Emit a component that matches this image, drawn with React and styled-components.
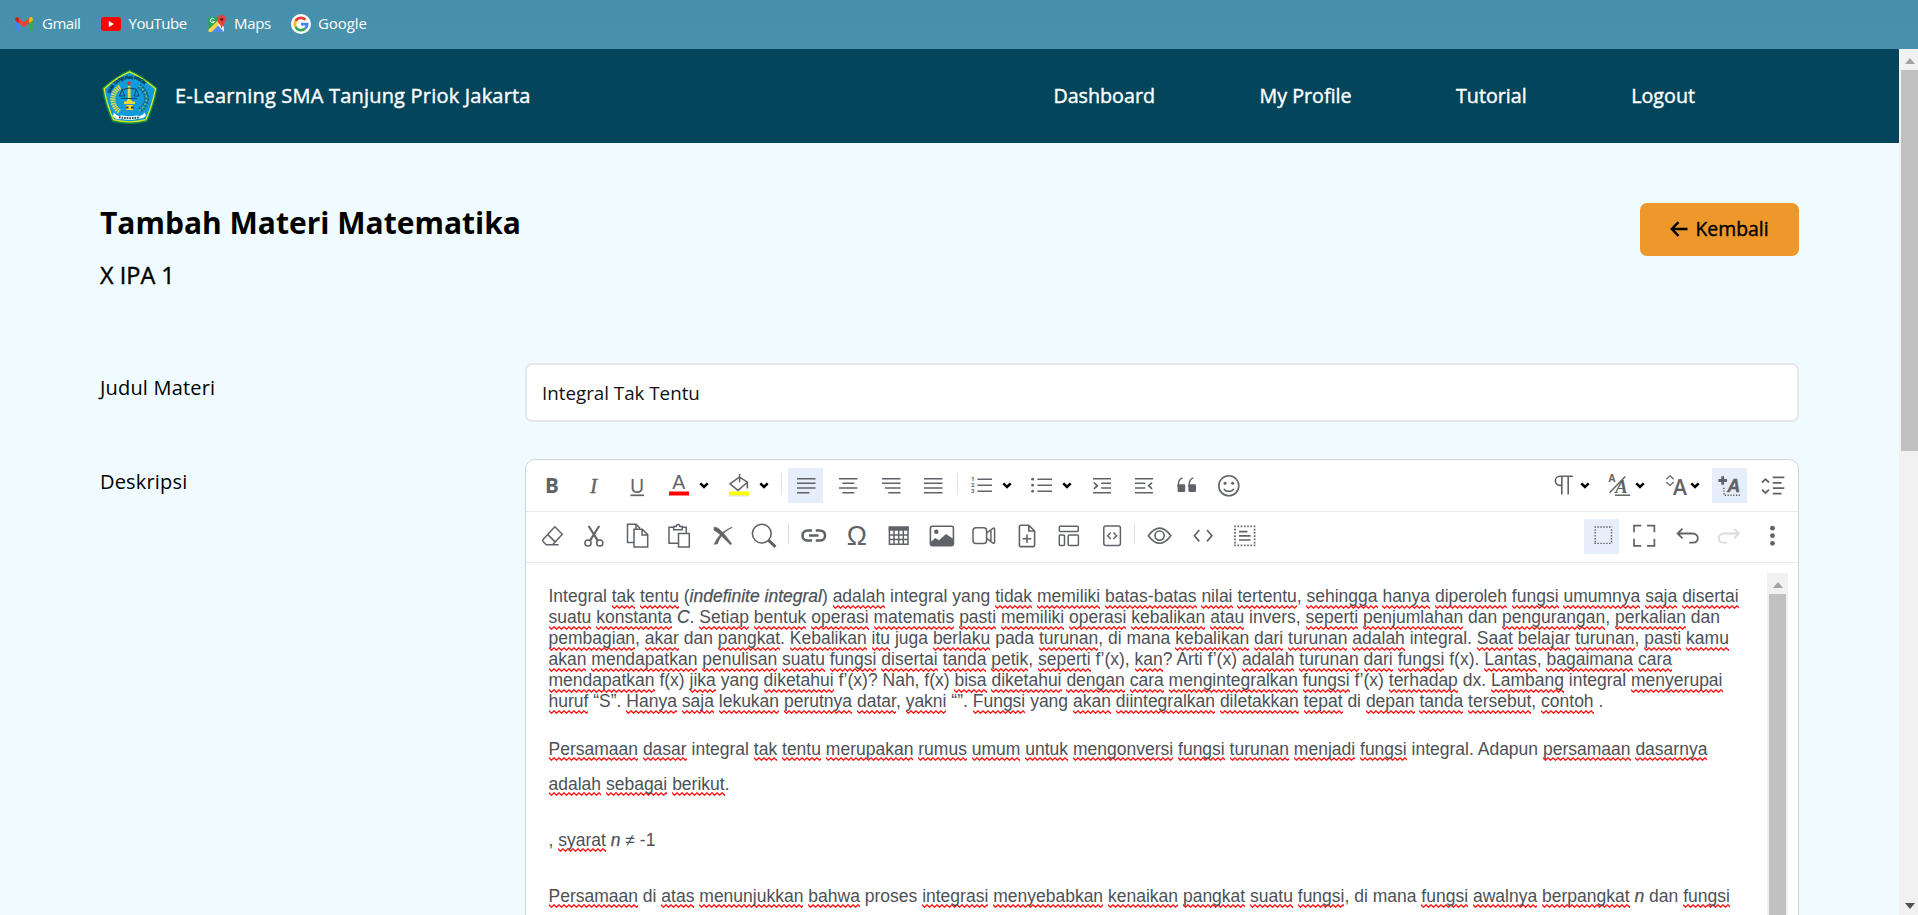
import React from "react";
import styled, { createGlobalStyle, css } from "styled-components";

const ink = "#5f6368";
const wave =
  "url(\"data:image/svg+xml,%3Csvg xmlns='http://www.w3.org/2000/svg' width='5' height='4'%3E%3Cpath d='M-2.5 3.2L0 .8L2.5 3.2L5 .8L7.5 3.2' fill='none' stroke='%23ff1010' stroke-width='1.3'/%3E%3C/svg%3E\")";

const GlobalStyle = createGlobalStyle`
  *, *::before, *::after { box-sizing: border-box; }
  html, body { margin: 0; height: 100%; overflow: hidden; }
  body { font-family: "Open Sans", sans-serif; color: #000; background: #effbff; }
  p, h1, h2 { margin: 0; }
`;

const Screen = styled.div`
  display: flex;
  flex-direction: column;
  height: 915px;
  overflow: hidden;
`;

const BookmarkBar = styled.nav`
  flex: none;
  display: flex;
  align-items: center;
  height: 49px;
  padding: 0 0 2px 14px;
  background: linear-gradient(#4690ad, #4791ac);
`;

const Bookmark = styled.a`
  display: flex;
  align-items: center;
  gap: ${(p) => p.$gap}px;
  width: ${(p) => p.$width}px;
  color: #fff;
  font-size: 15px;
  line-height: 20px;
  letter-spacing: ${(p) => p.$track || 0}px;
  white-space: nowrap;
  svg { flex: none; }
  span { padding-bottom: 2px; }
`;

const Viewport = styled.div`
  flex: 1;
  min-height: 0;
  display: flex;
`;

const Page = styled.div`
  flex: 1;
  min-width: 0;
  overflow: hidden;
  background: #effbff;
`;

const medium = css`
  font-weight: 400;
  -webkit-text-stroke: 0.4px currentColor;
`;

const Header = styled.header`
  display: flex;
  align-items: center;
  justify-content: space-between;
  height: 94px;
  padding: 0 204px 2px 101px;
  background: #03465c;
  color: #fff;
  font-size: 20px;
  ${medium}
`;

const Brand = styled.div`
  display: flex;
  align-items: center;
  gap: 16px;
  letter-spacing: 0.2px;
  svg { position: relative; top: 1px; -webkit-text-stroke: 0; }
`;

const Menu = styled.nav`
  display: flex;
  gap: 104.5px;
  font-size: 19.7px;
`;

const Main = styled.main`
  padding: 60px 100px 0;
`;

const TitleRow = styled.div`
  display: flex;
  justify-content: space-between;
  align-items: flex-start;
  height: 160px;
`;

const Title = styled.h1`
  font-size: 30px;
  line-height: 40px;
  font-weight: 700;
`;

const Subtitle = styled.h2`
  margin-top: 15px;
  font-size: 23.5px;
  line-height: 34px;
  ${medium}
`;

const BackButton = styled.button`
  display: flex;
  align-items: center;
  justify-content: center;
  gap: 7px;
  width: 159px;
  height: 53px;
  padding: 0 0 2px;
  border: 0;
  border-radius: 7px;
  background: #ee982b;
  color: #000;
  font: 400 19.4px "Open Sans", sans-serif;
  ${medium}
`;

const Field = styled.div`
  display: grid;
  grid-template-columns: 425px 1274px;
  align-items: start;
  margin-bottom: 37px;
`;

const Label = styled.label`
  padding-top: ${(p) => p.$top}px;
  font-size: 20px;
  line-height: 28px;
  letter-spacing: 0.18px;
`;

const Input = styled.input`
  height: 59px;
  width: 100%;
  padding: 0 15px;
  border: 2px solid #e5e7eb;
  border-radius: 7px;
  background: #fff;
  color: #111;
  outline: 0;
  font: 400 18.75px "Open Sans", sans-serif;
`;

const Editor = styled.section`
  height: 520px;
  border: 1px solid #cfd4d8;
  border-radius: 10px 10px 0 0;
  background: #fff;
`;

const ToolRow = styled.div`
  display: flex;
  align-items: center;
  height: ${(p) => p.$height}px;
  padding: 0 ${(p) => p.$right}px ${(p) => p.$bottom || 0}px 4.5px;
  border-bottom: 1px solid #e8eaed;
`;

const Spacer = styled.div`
  flex: 1;
`;

const Separator = styled.div`
  width: 1px;
  height: 21px;
  margin: 0 2.625px 5px;
  background: #dfe1e5;
`;

const ToolButton = styled.button`
  display: flex;
  align-items: center;
  justify-content: center;
  width: 35px;
  height: 35px;
  margin: 0 3.75px;
  padding: 0;
  border: 0;
  color: ${(p) => (p.$disabled ? "#dadce0" : ink)};
  background: ${(p) => (p.$active ? "#e6eefc" : "transparent")};
  ${(p) => p.$menu && css`width: 52.5px; justify-content: flex-start; padding-left: 2.5px; gap: 5px;`}
  ${(p) => p.$compact && css`width: 47.5px; justify-content: flex-start; padding-left: 5px; gap: 0;`}
  > svg { flex: none; }
  > svg + svg { margin-left: ${(p) => (p.$compact ? -2 : 0)}px; }
`;

const Body = styled.div`
  display: flex;
  justify-content: space-between;
  height: 400px;
  padding: 10px 10px 0 22.5px;
`;

const Copy = styled.article`
  min-width: 0;
  padding-top: 13px;
  color: #4d5156;
  font-family: "Liberation Sans", Arial, sans-serif;
  font-size: 17.5px;
  line-height: 21.07px;
  white-space: nowrap;
`;

const Paragraph = styled.p`
  line-height: ${(p) => p.$leading || 21.07}px;
  margin-bottom: ${(p) => p.$after || 0}px;
  em { -webkit-text-stroke: 0.25px currentColor; }
`;

const Misspelt = styled.span`
  padding-bottom: 2.5px;
  background: ${wave} left bottom / 5px 4px repeat-x;
`;

const Track = styled.div`
  flex: none;
  display: flex;
  flex-direction: column;
  align-items: ${(p) => (p.$inner ? "center" : "flex-end")};
  width: ${(p) => (p.$inner ? 21 : 19)}px;
  background: #f1f1f1;
`;

const Thumb = styled.div`
  width: 17px;
  height: ${(p) => p.$height}px;
  margin-bottom: auto;
  background: #c1c1c1;
`;

const ScrollArrow = styled.div`
  flex: none;
  display: flex;
  align-items: center;
  justify-content: center;
  align-self: stretch;
  height: 21px;
  padding: ${(p) => (p.$inner ? "2px 0 0" : "2px 0 0 2px")};
`;

const L = (props) => <path fill="none" stroke="currentColor" strokeWidth="1.5" {...props} />;
const T = ({ family = "Open Sans", ...props }) => <text fill="currentColor" fontFamily={family} {...props} />;

const icons = {
  bold: <T x="8" y="22" fontSize="20.5" fontWeight="700">B</T>,
  italic: <T x="11" y="22" fontSize="21.5" fontStyle="italic" stroke="currentColor" strokeWidth="0.3" family="Liberation Serif">I</T>,
  underline: <><T x="8" y="21.5" fontSize="19.5" stroke="currentColor" strokeWidth="0.2">U</T><L strokeWidth="1.7" d="M8.5 24.3H22" /></>,
  color: <><T x="8.3" y="18.2" fontSize="19.5" family="Liberation Sans">A</T><rect x="5" y="20.5" width="20" height="4" fill="#f00" /></>,
  fill: <><L strokeWidth="1.5" d="M15.4 6.2L6 12.8L14 19.4L23.4 11.2L15.4 6.2M15.6 3V11.2M23.3 11.2V17.5" /><rect x="5" y="20.5" width="20" height="4" fill="#ff0" /><path d="M5 24.9H25" stroke="#d8d8d8" /></>,
  left: <L d="M6 7.7H24.5M6 12.3H24.5M6 17H24.5M6 21.7H18.4" />,
  center: <L d="M6 7.7H24.5M9.3 12.3H21.2M6 17H24.5M9.3 21.7H21.2" />,
  right: <L d="M6 7.7H24.5M6 12.3H24.5M9 17H24.5M12.2 21.7H24.5" />,
  justify: <L d="M6 7.7H24.5M6 12.3H24.5M6 17H24.5M6 21.7H24.5" />,
  ol: <><L d="M10.4 8.2H25M10.4 14.2H25M10.4 20.2H25" />{["1", "2", "3"].map((n, i) => <T key={n} x="4" y={10.2 + i * 6} fontSize="6" fontWeight="700">{n}</T>)}</>,
  ul: <><L d="M10.4 8.2H25M10.4 14.2H25M10.4 20.2H25" />{[8.2, 14.2, 20.2].map((y) => <circle key={y} cx="5.6" cy={y} r="1.4" fill="currentColor" />)}</>,
  indent: <><L d="M6 7.7H24M14.2 12.3H24M14.2 17H24M6 21.7H24" /><L strokeWidth="1.7" d="M6.9 11.6L10.3 14.7L6.9 17.8" /></>,
  outdent: <><L d="M6 7.7H24M6 12.3H16.3M6 17H16.3M6 21.7H24" /><L strokeWidth="1.7" d="M23.1 11.6L19.7 14.7L23.1 17.8" /></>,
  quote: <>{[0, 10.8].map((x) => <g key={x} transform={`translate(${x})`}><rect x="5.6" y="13.3" width="7.6" height="7.6" rx="1.2" fill="currentColor" /><L d="M6.3 16V14C6.3 10 7.3 8 10.6 6.9" /></g>)}</>,
  emoji: <><circle cx="14.8" cy="14.8" r="10" fill="none" stroke="currentColor" strokeWidth="1.6" /><circle cx="11" cy="12.2" r="1.5" fill="currentColor" /><circle cx="18.6" cy="12.2" r="1.5" fill="currentColor" /><L d="M9.8 17.8C12 21.2 17.6 21.2 19.8 17.8" /></>,
  pilcrow: <L strokeWidth="1.6" d="M20.8 5.3H8C1.8 5.3 1.8 14.4 8 14.4H9.4M9.8 5.3V23.5M16.2 5.3V23.5" />,
  style: <><T x="1.6" y="10.7" fontSize="10" fontWeight="700">A</T><L strokeWidth="1.4" d="M18.3 5.5L2.5 21.8" /><T x="8.2" y="22" fontSize="18.5" fontStyle="italic" fontWeight="700" family="Liberation Serif">A</T><L d="M8 24.2H23.2" /></>,
  size: <><L strokeWidth="1.2" d="M4.3 8.3L8 4.8L11.7 8.3M4.3 11L8 14.5L11.7 11" /><T x="11" y="24.4" fontSize="21" fontWeight="600">A</T></>,
  plusA: <><L strokeWidth="2.8" d="M3.4 9.5H12M7.7 5.2V13.8" /><T x="12.2" y="20.8" fontSize="18" fontStyle="italic" fontWeight="700" stroke="currentColor" strokeWidth="0.4" family="Liberation Sans">A</T><L strokeDasharray="1.3 1.5" d="M8.9 16.7V24.2H25" /></>,
  spacing: <><L strokeWidth="1.8" d="M5 11.5L8.5 8.2L12 11.5M5 18.6L8.5 21.9L12 18.6" /><L strokeWidth="1.7" d="M15.8 6.4H27.3M15.8 11.8H24.6M15.8 17.2H27.3M15.8 22.7H24.6" /></>,
  eraser: <L d="M9.2 23.7L6.3 20.8C5.6 20.1 5.6 19 6.3 18.2L17.8 5.8L25.3 13.2L15.6 23.7ZM10.5 13.4L18 20.6M9.2 23.7H21.7" />,
  cut: <><circle cx="9" cy="22" r="3.1" fill="none" stroke="currentColor" strokeWidth="1.5" /><circle cx="20.8" cy="22" r="3.1" fill="none" stroke="currentColor" strokeWidth="1.5" /><L strokeWidth="2.1" d="M9.6 5L18.8 19.6M20.2 5L11 19.6" /></>,
  copy: <L d="M11.5 21.5H5.5V3.3H14.2L18 7.2M12 8.2H20.3L25.7 13.6V26H12ZM20 8.3V13.9H25.6M14 3.5V8" />,
  paste: <L d="M14 22.3H5V6.3H9.5M18.2 6.3H22.2V12M9.7 8.8V5.5H12.2C12.2 2.9 15.8 2.9 15.8 5.5H18.2V8.8ZM14.5 12.4H25.3V26H14.5Z" />,
  remove: <path fill="currentColor" stroke="currentColor" strokeWidth="0.7" d="M7.2 6.2C11 5.9 15.8 10.5 24.7 23L23.3 23.5C16 16.6 11.8 11.5 7 9.2ZM25.3 6.2C18.5 9.8 12.8 15 10.4 22.8L7.3 23.3C10.2 16 16.5 9.2 25.3 6.2Z" />,
  search: <><circle cx="12.8" cy="12.6" r="9.4" fill="none" stroke="currentColor" strokeWidth="1.6" /><L strokeWidth="3" d="M19.2 18.8L26.5 25.8" /></>,
  link: <L strokeWidth="2.5" d="M14 9.4H10C2.6 9.4 2.6 19.6 10 19.6H14M17.8 9.4H21.5C28.9 9.4 28.9 19.6 21.5 19.6H17.8M11 14.5H20.5" />,
  omega: <T x="5.7" y="23.8" fontSize="27" family="Liberation Sans">Ω</T>,
  table: <><L d="M6.4 6.2H25V23.2H6.4ZM11 8V23.2M15.7 8V23.2M20.3 8V23.2M6 14H25M6 18.6H25" /><rect x="5.7" y="5.5" width="20" height="4.2" fill="currentColor" /></>,
  image: <><rect x="4.4" y="5.2" width="23" height="19.4" rx="2" fill="none" stroke="currentColor" strokeWidth="1.6" /><circle cx="10.3" cy="10.8" r="2.2" fill="currentColor" /><path fill="currentColor" d="M4.7 21L9.3 17L13 19.3L20 13L27.4 18V24.6H4.7Z" /></>,
  video: <><rect x="5" y="6.8" width="13.6" height="15.8" rx="3" fill="none" stroke="currentColor" strokeWidth="1.5" /><L d="M18.6 12L25 7.3Q26.6 6.6 26.6 8.5V21Q26.6 22.8 25 22.1L18.6 17.4M22.9 9V20.5" /></>,
  filePlus: <L strokeWidth="1.6" d="M17.8 4.2H9.8Q8.4 4.2 8.4 5.6V24.2Q8.4 25.6 9.8 25.6H22.2Q23.6 25.6 23.6 24.2V10ZM17.8 4.2V10H23.6M16 13.5V22M11.7 17.8H20.3" />,
  template: <><rect x="6.3" y="5.3" width="19" height="5.2" rx="1" fill="none" stroke="currentColor" strokeWidth="1.5" /><rect x="6.3" y="14" width="5.2" height="10.4" rx="1" fill="none" stroke="currentColor" strokeWidth="1.5" /><rect x="15.2" y="14" width="10.2" height="10.4" rx="1" fill="none" stroke="currentColor" strokeWidth="1.5" /></>,
  codeFile: <><rect x="7.8" y="5" width="16.6" height="19.6" rx="2" fill="none" stroke="currentColor" strokeWidth="1.5" /><L d="M14.7 11.6L11.7 14.8L14.7 18M17.5 11.6L20.5 14.8L17.5 18" /></>,
  eye: <><L strokeWidth="1.6" d="M4.4 14.7Q15.5 -.4 26.8 14.7Q15.5 29.8 4.4 14.7Z" /><circle cx="15.6" cy="14.6" r="4.6" fill="none" stroke="currentColor" strokeWidth="1.6" /></>,
  code: <L strokeWidth="1.7" d="M12.3 9L7.4 14.7L12.3 20.4M20 9L24.9 14.7L20 20.4" />,
  selectAll: <><L strokeWidth="1.7" strokeDasharray="1.6 1.65" d="M5.2 5.4H26.4M5.2 24.4H26.4M6 7.8V23M25.6 7.8V23" /><L strokeWidth="1.7" d="M10 10.6H18.5M10 14.8H21.6M10 19H21.6" /></>,
  select: <L strokeWidth="1.4" strokeDasharray="1.5 1.4" d="M7.5 6H25.2M7.5 22.4H25.2M8.2 8.2V21.5M24.5 8.2V21.5" />,
  fullscreen: <L strokeWidth="1.7" d="M12.3 4.6H5V11.3M18 4.6H25.4V11.3M25.4 17.8V24.8H18M12.3 24.8H5V17.8" />,
  undo: <L strokeWidth="1.8" d="M10.5 7.7L5.6 12.5L10.5 17.3M5.6 12.5H20.5C27.5 12.5 27.5 21.7 21 21.7H17.3" />,
  redo: <L strokeWidth="1.8" d="M20 7.7L24.9 12.5L20 17.3M24.9 12.5H10C3 12.5 3 21.7 9.5 21.7H13.2" />,
  more: <>{[7.2, 14.7, 22.3].map((y) => <circle key={y} cx="15.5" cy={y} r="2.4" fill="currentColor" />)}</>,
};

const Glyph = ({ name }) => <svg width="30" height="30" viewBox="0 0 30 30">{icons[name]}</svg>;
const Chevron = () => (
  <svg width="10" height="7" viewBox="0 0 10 7">
    <path d="M1.3 1.3L5 5L8.7 1.3" fill="none" stroke="#000" strokeWidth="2.5" />
  </svg>
);

const Tool = ({ name, menu, compact, ...rest }) => (
  <ToolButton $menu={menu} $compact={compact} {...rest}>
    <Glyph name={name} />
    {(menu || compact) && <Chevron />}
  </ToolButton>
);

const Tools = ({ names }) => names.map((n, i) => (n === "|" ? <Separator key={i} /> : <Tool key={i} name={n} />));

/* Words wrapped in [ ] carry the spell-check wave, those in * * are italic. */
const Rich = ({ children }) =>
  children.split(/(\[[^\]]+\]|\*[^*]+\*)/).map((part, i) => {
    if (part[0] === "[") return <Misspelt key={i}>{part.slice(1, -1)}</Misspelt>;
    if (part[0] === "*") return <em key={i}>{part.slice(1, -1)}</em>;
    return part;
  });

const intro = [
  "Integral [tak] [tentu] (*indefinite integral*) [adalah] integral yang [tidak] [memiliki] [batas-batas] [nilai] [tertentu], [sehingga] [hanya] [diperoleh] [fungsi] [umumnya] [saja] [disertai]",
  "[suatu] [konstanta] *C*. [Setiap] [bentuk] [operasi] [matematis] [pasti] [memiliki] [operasi] [kebalikan] [atau] invers, [seperti] [penjumlahan] dan [pengurangan], [perkalian] dan",
  "[pembagian], [akar] dan [pangkat]. [Kebalikan] [itu] juga [berlaku] pada [turunan], di mana [kebalikan] [dari] [turunan] [adalah] integral. [Saat] [belajar] [turunan], [pasti] [kamu]",
  "[akan] [mendapatkan] [penulisan] [suatu] [fungsi] [disertai] [tanda] [petik], [seperti] f’(x), [kan]? Arti f’(x) [adalah] [turunan] [dari] [fungsi] f(x). [Lantas], [bagaimana] [cara]",
  "[mendapatkan] f(x) [jika] yang [diketahui] f’(x)? Nah, f(x) [bisa] [diketahui] [dengan] [cara] [mengintegralkan] [fungsi] f’(x) [terhadap] dx. [Lambang] integral [menyerupai]",
  "[huruf] “S”. [Hanya] [saja] [lekukan] [perutnya] [datar], [yakni] “”. [Fungsi] yang [akan] [diintegralkan] [diletakkan] [tepat] di [depan] [tanda] [tersebut], [contoh] .",
];
const base = [
  "[Persamaan] [dasar] integral [tak] [tentu] [merupakan] [rumus] [umum] [untuk] [mengonversi] [fungsi] [turunan] [menjadi] [fungsi] integral. Adapun [persamaan] [dasarnya]",
  "[adalah] [sebagai] [berikut].",
];

const Lines = ({ lines }) => lines.map((l, i) => <div key={i}><Rich>{l}</Rich></div>);

const Crest = () => (
  <svg width="58" height="58" viewBox="0 0 58 58">
    <path d="M28.5 4Q41 9.5 55.3 21.5Q52.3 38 45.5 53.5Q28.5 58 12 53.5Q4.8 38 2.3 21.5Q16 9.5 28.5 4Z" fill="#109bdc" stroke="#128c46" strokeWidth="2.4" strokeLinejoin="round" />
    <path d="M28.5 4.8Q41 10 54.5 21.8Q51.3 38 44.9 52.7Q28.5 57 12.6 52.7Q5.8 38 3.2 21.8Q16 10 28.5 4.8Z" fill="none" stroke="#d8eb20" strokeWidth="1.3" />
    <path id="crest-arc" d="M9 27Q16 12 29 12Q42 12 50 27" fill="none" />
    <text fontFamily="Open Sans" fontSize="5" fontWeight="800" fill="#073650" textLength="43"><textPath href="#crest-arc">SMA TANJUNG PRIOK</textPath></text>
    <path d="M19 20C9 26 10 39 19 45" fill="none" stroke="#d7db45" strokeWidth="5" strokeDasharray="1.6 .7" />
    <path d="M38 19C48 26 48 37 38 44" fill="none" stroke="#17677a" strokeWidth="5" strokeDasharray="2 1" />
    <path d="M38 19C48 26 48 37 38 44" fill="none" stroke="#75c9a1" strokeWidth="1.4" strokeDasharray="2 2" />
    <circle cx="28" cy="16.2" r="1.8" fill="#e52d28" />
    <path d="M26.8 19H29.6V32L31.5 35H25L26.8 32ZM23 34.5H34V37H23ZM25 38H32V43H25Z" fill="#ecdc38" />
    <path d="M21 22.5L28.5 21L36 22.5M21 22.5L18.5 29H24ZM35.5 22.5L33 29H38ZM20 31.5H36" fill="none" stroke="#173f67" strokeWidth="1" />
    <path d="M25 40.5H27.5M30 40.5H32.5" stroke="#1b3955" strokeWidth="2" />
    <path d="M13 45.5Q16 50 21 48.5Q29 50 36 48.5Q41 50 43.5 45.5L45 49Q41 52.5 36 52Q29 54 21 52Q14 53 12 49Z" fill="#fff" />
    <path d="M18 50.3Q28.5 52 39 50.3" fill="none" stroke="#234e46" strokeWidth="2" strokeDasharray="1.6 1" />
  </svg>
);

const GmailMark = () => (
  <svg width="20" height="16" viewBox="0 0 20 16">
    <path d="M1.2 4V14.6H4.9V6.5Z" fill="#4285f4" /><path d="M15.1 6.5V14.6H18.8V4Z" fill="#34a853" />
    <path d="M15.1 2V7.3L18.8 4.4V3Q18.5.7 16.2 1.2Z" fill="#fbbc04" />
    <path d="M1.2 4.4V3Q1.6.6 4 1.3L10 6.2L15.1 2.1V7.3L10 11.2L4.9 7.3Z" fill="#ea4335" /><path d="M1.2 4.4V3Q1.6.8 4 1.3L4.9 2V7.3Z" fill="#c5221f" />
  </svg>
);
const YouTubeMark = () => (
  <svg width="20" height="14" viewBox="0 0 20 14"><rect width="20" height="14" rx="3" fill="#f00" /><path d="M7.8 4L13 7L7.8 10Z" fill="#fff" /></svg>
);
const MapsMark = () => (
  <svg width="20" height="20" viewBox="0 0 20 20">
    <path d="M2.5 3H15V18H2.5Q1.5 18 1.5 17V4Q1.5 3 2.5 3Z" fill="#27a35b" /><path d="M3 18L10.5 11L17.5 18Z" fill="#4f8df5" />
    <path d="M1.5 15.5L13.5 4L16.5 6.5L4.5 18H1.5Z" fill="#fbd249" /><path d="M10.5 11L13 8.5L17 13V18Z" fill="#e9edf0" />
    <path d="M14.6 1C8.8 1 9.6 7.2 12.5 10Q14.2 12 14.4 14H15Q15.2 12 16.8 10C19.8 7 20.2 1 14.6 1Z" fill="#e5443a" /><circle cx="14.7" cy="5.3" r="1.6" fill="#6f1b1b" />
    <path d="M7.3 5.2A2.2 2.2 0 1 0 7.5 7.6H5.4" fill="none" stroke="#fff" strokeWidth="1" />
  </svg>
);
const GoogleMark = () => (
  <svg width="20" height="20" viewBox="0 0 20 20">
    <circle cx="10" cy="10" r="10" fill="#fff" />
    <g fill="none" strokeWidth="2.7"><path d="M14.5 5.8A6.2 6.2 0 0 0 4.6 7.1" stroke="#ea4335" /><path d="M4.6 7.1A6.2 6.2 0 0 0 4.6 12.9" stroke="#fbbc05" /><path d="M4.6 12.9A6.2 6.2 0 0 0 14 14.8" stroke="#34a853" /><path d="M14 14.8A6.2 6.2 0 0 0 16.2 10.2H10" stroke="#4285f4" /></g>
  </svg>
);

const Triangle = ({ down, dark }) => (
  <svg width="10" height="6" viewBox="0 0 10 6"><path d={down ? "M0 0H10L5 6Z" : "M0 6H10L5 0Z"} fill={dark ? "#505050" : "#a3a3a3"} /></svg>
);

export default function App() {
  return (
    <Screen>
      <GlobalStyle />
      <BookmarkBar>
        <Bookmark $gap={8} $width={87} $track={-0.5}><GmailMark /><span>Gmail</span></Bookmark>
        <Bookmark $gap={7.5} $width={106} $track={-0.5}><YouTubeMark /><span>YouTube</span></Bookmark>
        <Bookmark $gap={7} $width={84} $track={-0.35}><MapsMark /><span>Maps</span></Bookmark>
        <Bookmark $gap={7} $width={90} $track={-0.1}><GoogleMark /><span>Google</span></Bookmark>
      </BookmarkBar>
      <Viewport>
        <Page>
          <Header>
            <Brand><Crest />E-Learning SMA Tanjung Priok Jakarta</Brand>
            <Menu><span>Dashboard</span><span>My Profile</span><span>Tutorial</span><span>Logout</span></Menu>
          </Header>
          <Main>
            <TitleRow>
              <div>
                <Title>Tambah Materi Matematika</Title>
                <Subtitle>X IPA 1</Subtitle>
              </div>
              <BackButton>
                <svg width="18" height="16" viewBox="0 0 18 16"><path d="M8.5 1.2L1.8 8L8.5 14.8M2 8H17.5" fill="none" stroke="#000" strokeWidth="2.4" /></svg>
                Kembali
              </BackButton>
            </TitleRow>
            <Field>
              <Label $top={11}>Judul Materi</Label>
              <Input defaultValue="Integral Tak Tentu" />
            </Field>
            <Field>
              <Label $top={9}>Deskripsi</Label>
              <Editor>
                <ToolRow $height={52} $right={4.5}>
                  <Tools names={["bold", "italic", "underline"]} />
                  <Tool name="color" menu /><Tool name="fill" menu />
                  <Separator />
                  <Tool name="left" $active />
                  <Tools names={["center", "right", "justify", "|"]} />
                  <Tool name="ol" menu /><Tool name="ul" menu />
                  <Tools names={["indent", "outdent", "quote", "emoji"]} />
                  <Spacer />
                  <Tool name="pilcrow" compact /><Tool name="style" compact /><Tool name="size" compact />
                  <Tool name="plusA" $active /><Tool name="spacing" />
                </ToolRow>
                <ToolRow $height={51} $right={5} $bottom={1.5}>
                  <Tools names={["eraser", "cut", "copy", "paste", "remove", "search", "|", "link", "omega", "table", "image", "video", "filePlus", "template", "codeFile", "|", "eye", "code", "selectAll"]} />
                  <Spacer />
                  <Tool name="select" $active /><Tool name="fullscreen" /><Tool name="undo" /><Tool name="redo" $disabled /><Tool name="more" />
                </ToolRow>
                <Body>
                  <Copy>
                    <Paragraph as="div" $after={19.5}><Lines lines={intro} /></Paragraph>
                    <Paragraph as="div" $leading={35} $after={21}><Lines lines={base} /></Paragraph>
                    <Paragraph $leading={35} $after={21}><Rich>{", [syarat] *n* ≠ -1"}</Rich></Paragraph>
                    <Paragraph $leading={35}><Rich>{"[Persamaan] di [atas] [menunjukkan] [bahwa] proses [integrasi] [menyebabkan] [kenaikan] [pangkat] [suatu] [fungsi], di mana [fungsi] [awalnya] [berpangkat] *n* dan [fungsi]"}</Rich></Paragraph>
                  </Copy>
                  <Track $inner><ScrollArrow $inner><Triangle /></ScrollArrow><Thumb $height={400} /></Track>
                </Body>
              </Editor>
            </Field>
          </Main>
        </Page>
        <Track>
          <ScrollArrow><Triangle /></ScrollArrow>
          <Thumb $height={381} />
          <ScrollArrow><Triangle down dark /></ScrollArrow>
        </Track>
      </Viewport>
    </Screen>
  );
}
